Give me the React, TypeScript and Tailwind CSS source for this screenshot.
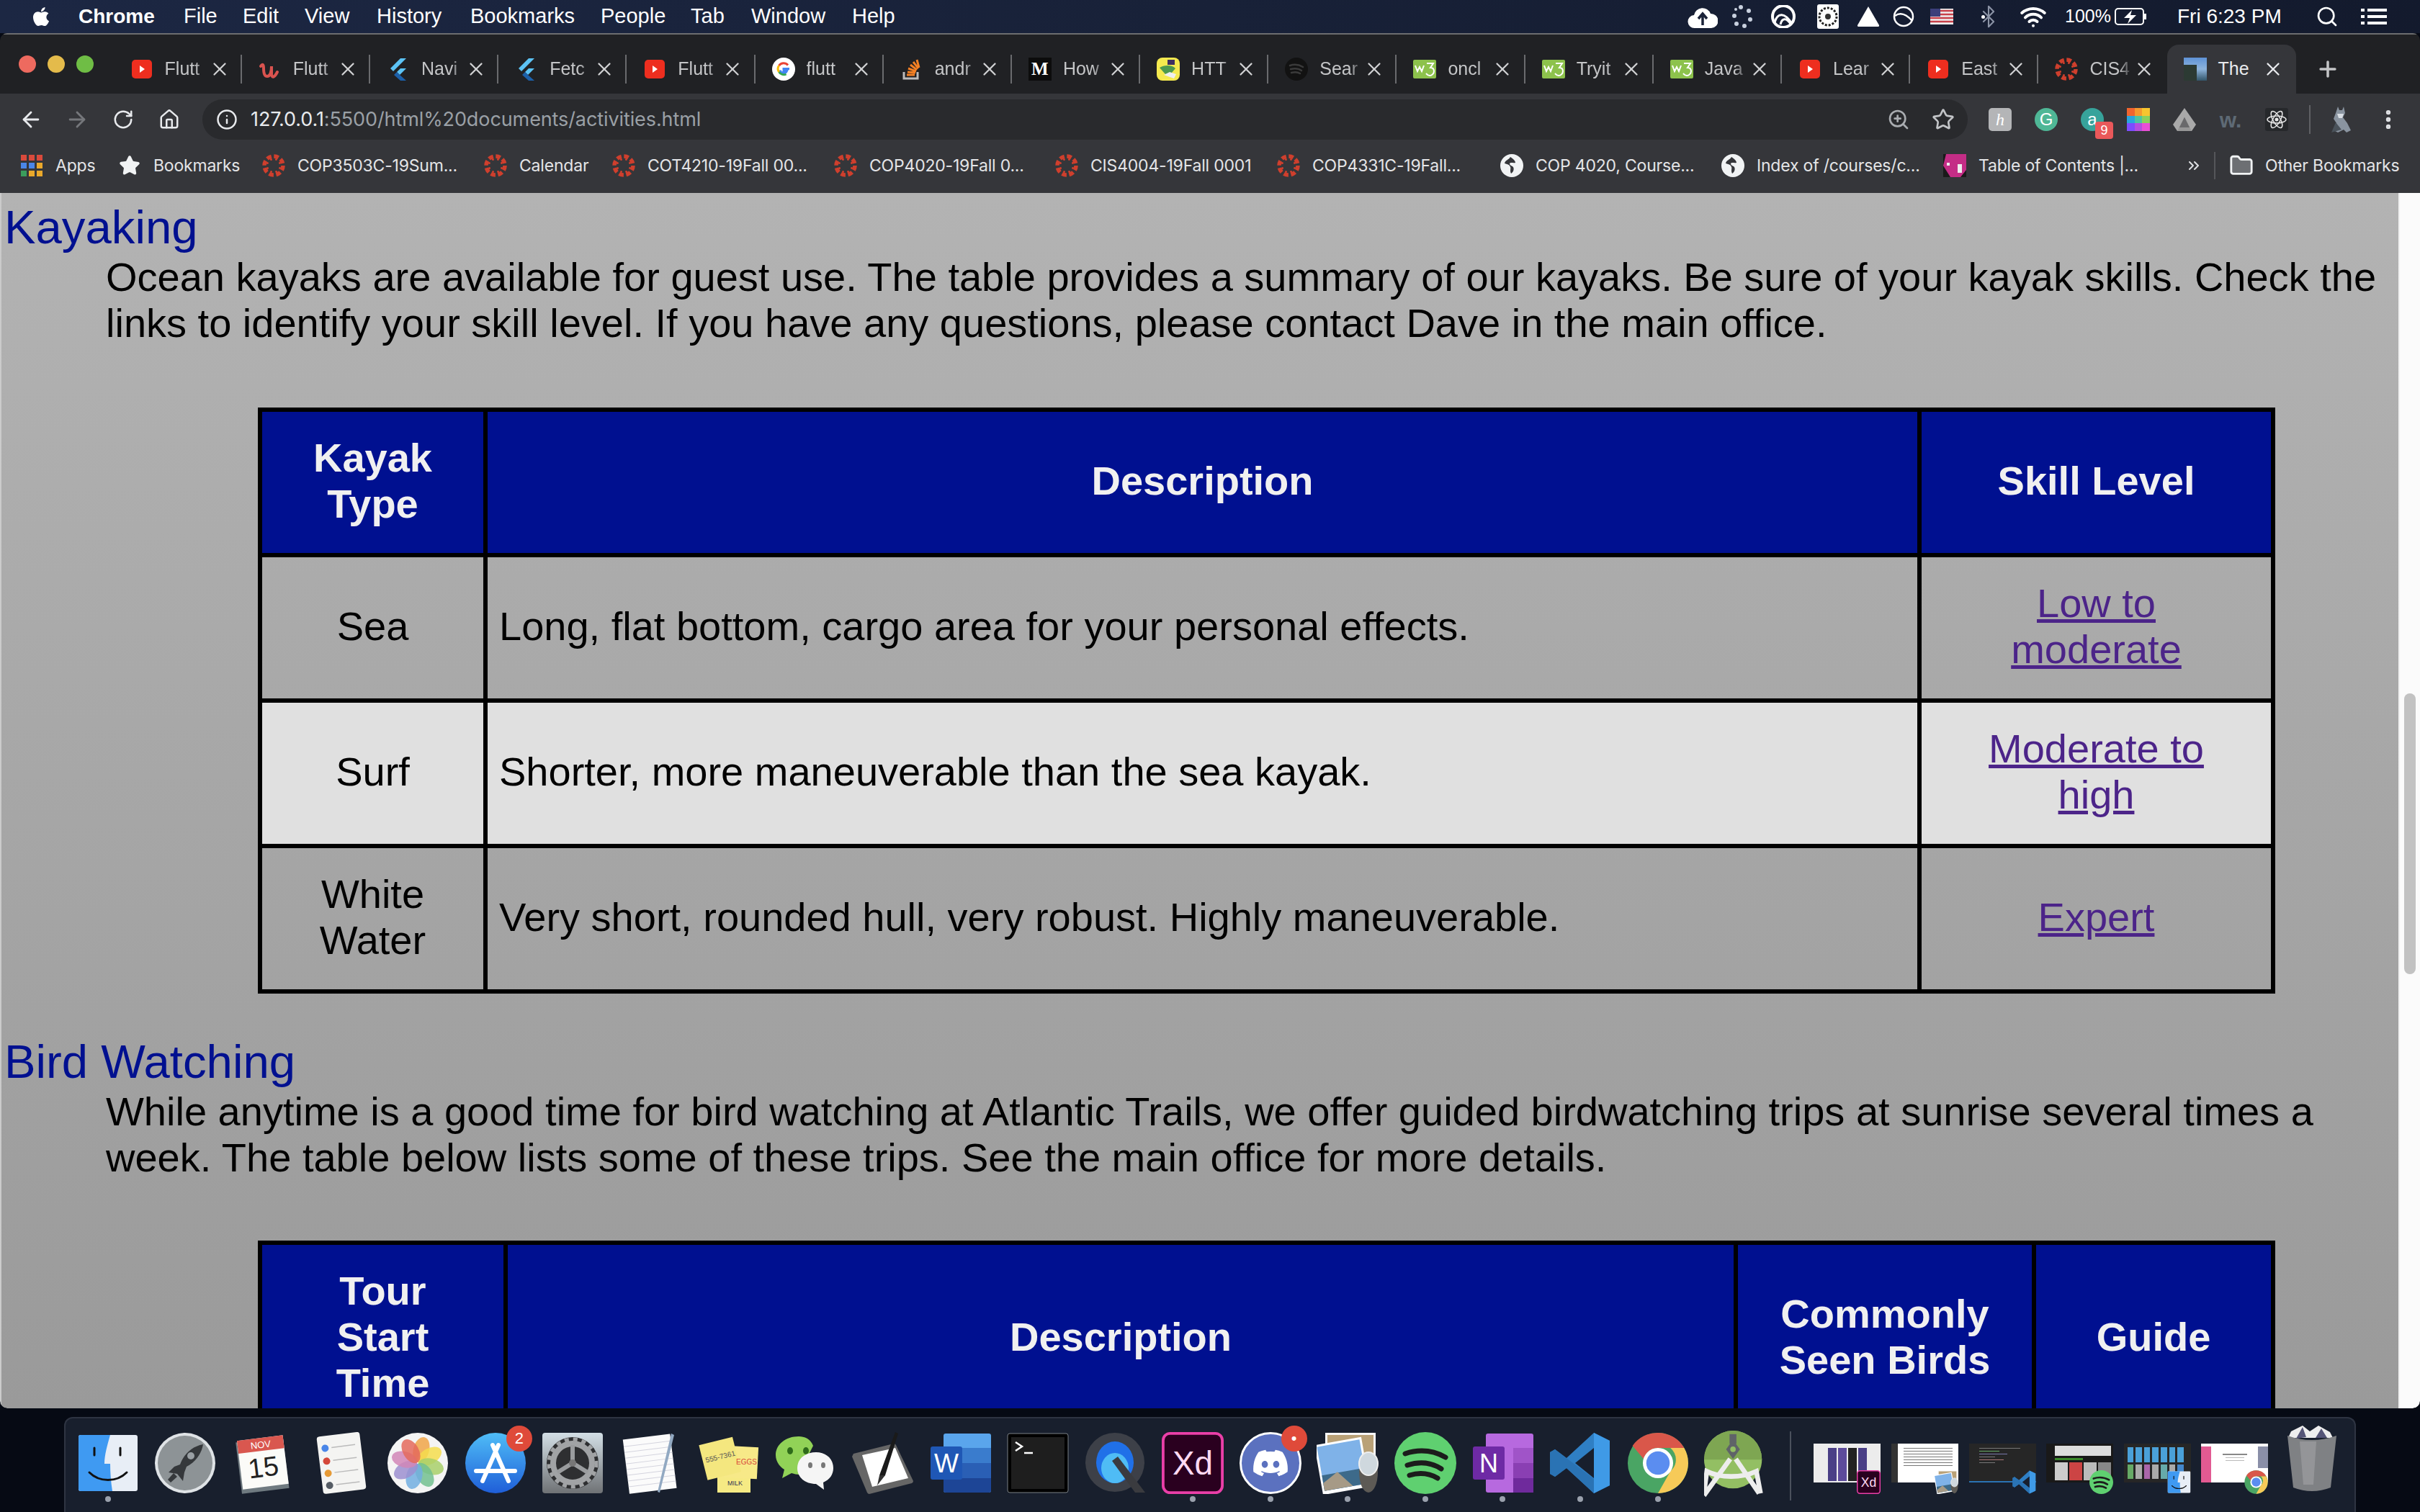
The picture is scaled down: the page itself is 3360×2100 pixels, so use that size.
import React from "react";
import { FaApple, FaDiscord } from "react-icons/fa";
import { Search, X, Plus, ArrowLeft, ArrowRight, RotateCw, Home, Info, ZoomIn, Star, MoreVertical, Folder, ChevronsRight, Wifi, Bluetooth } from "lucide-react";

const Canvas = ({ s = 32 }: { s?: number }) => (
  <svg width={s} height={s} viewBox="0 0 32 32" className="flex-none">
    <circle cx="16" cy="16" r="13" fill="none" stroke="#cf3f2d" strokeWidth="5.5" strokeDasharray="6.6 3.6" />
    {[0, 45, 90, 135, 180, 225, 270, 315].map((a) => (
      <circle key={a} cx="16" cy="6.8" r="1.5" fill="#cf3f2d" transform={`rotate(${a + 22} 16 16)`} />
    ))}
  </svg>
);
const YT = () => (
  <svg width="32" height="32" viewBox="0 0 32 32" className="flex-none"><rect x="2" y="3" width="28" height="26" rx="5" fill="#ee2e1f" /><path d="M13 11l7 5-7 5z" fill="#fff" /></svg>
);
const Udemy = () => (
  <svg width="32" height="32" viewBox="0 0 32 32" className="flex-none"><path d="M3 12c3-4 4-2 4 3 0 6 1 11 5 11s6-6 6-14v12c1 4 4 4 8-4" fill="none" stroke="#d9534f" strokeWidth="4" strokeLinecap="round" /></svg>
);
const Flutter = () => (
  <svg width="32" height="32" viewBox="0 0 32 32" className="flex-none"><path d="M19 1h8L9 19l-4-4z" fill="#5cc3f5" /><path d="M19 15h8l-9 9-4-4z" fill="#5cc3f5" /><path d="M14 20l4 4 9 8h-8l-9-8z" fill="#1c5fa8" /></svg>
);
const Google = () => (
  <svg width="32" height="32" viewBox="0 0 32 32" className="flex-none">
    <circle cx="16" cy="16" r="16" fill="#fff" />
    <path d="M24 15.500h-8v3h4.600a5 5 0 0 1-9.500-1" fill="none" stroke="#4285f4" strokeWidth="3" />
    <path d="M22 10.500A8 8 0 0 0 9.600 11" fill="none" stroke="#ea4335" strokeWidth="3" />
    <path d="M9.600 11a8 8 0 0 0 0 9" fill="none" stroke="#fbbc05" strokeWidth="3" />
    <path d="M9.600 20a8 8 0 0 0 10 3" fill="none" stroke="#34a853" strokeWidth="3" />
  </svg>
);
const SO = () => (
  <svg width="32" height="32" viewBox="0 0 32 32" className="flex-none">
    <path d="M5 20v9h19v-9" fill="none" stroke="#bcbbbb" strokeWidth="3" />
    <path d="M9 24h11M10 20l11 1M11 15l11 4M14 10l9 7M18 6l7 9M23 3l3 11" fill="none" stroke="#f48024" strokeWidth="3" />
  </svg>
);
const Medium = () => (
  <div className="w-[32px] h-[32px] bg-[#0c0c0c] flex-none flex items-center justify-center text-white text-[25px] font-bold [font-family:'Liberation_Serif',serif]">M</div>
);
const HttpCat = () => (
  <svg width="32" height="32" viewBox="0 0 32 32" className="flex-none">
    <rect width="32" height="32" rx="8" fill="#f5ea4f" /><rect x="15" y="3" width="10" height="7" fill="#3f3060" />
    <path d="M4 14c6-4 18-4 22 1l-6 7-8 1z" fill="#4e9a4e" /><path d="M10 24l14 5 3-6-9-3z" fill="#efefef" />
  </svg>
);
const SpotifyDark = () => (
  <svg width="32" height="32" viewBox="0 0 32 32" className="flex-none">
    <circle cx="16" cy="16" r="16" fill="#121212" /><path d="M7 11c6-2 13-1 18 2M8 16c5-1 11-1 15 2M9 21c4-1 9-1 12 1" fill="none" stroke="#3a3a3a" strokeWidth="2.500" strokeLinecap="round" />
  </svg>
);
const W3 = () => (
  <svg width="32" height="32" viewBox="0 0 32 32" className="flex-none">
    <rect y="3" width="32" height="26" rx="2" fill="#8dc24c" />
    <path d="M3 11l3 8 3-6 3 6 3-8M19 8h9l-4 6c3 0 5 2 5 5s-3 6-6 6-4-2-5-3" fill="none" stroke="#fff" strokeWidth="2" />
  </svg>
);
const PhotoTab = () => (
  <div className="w-[32px] h-[32px] flex-none bg-gradient-to-b from-[#5f93d6] via-[#8eb4dc] to-[#33566a] overflow-hidden flex items-end"><div className="w-[18px] h-[22px] bg-[#2c3a33]" /></div>
);

const tabs: [React.ReactNode, string][] = [
  [<YT />, "Flutt"], [<Udemy />, "Flutt"], [<Flutter />, "Navi"], [<Flutter />, "Fetc"], [<YT />, "Flutt"], [<Google />, "flutt"],
  [<SO />, "andr"], [<Medium />, "How"], [<HttpCat />, "HTT"], [<SpotifyDark />, "Sear"], [<W3 />, "oncl"], [<W3 />, "Tryit"],
  [<W3 />, "Java"], [<YT />, "Lear"], [<YT />, "East"], [<Canvas />, "CIS4"],
];

const Tab = ({ icon, title, sep }: { icon: React.ReactNode; title: string; sep: boolean }) => (
  <div className="w-[178.2px] h-[68px] flex-none flex items-center pl-[23px]">
    {icon}
    <div className="ml-[16px] w-[60px] whitespace-nowrap text-[25px] text-[#c4c5c7] [mask-image:linear-gradient(to_right,black_70%,transparent)]">{title}</div>
    <div className="w-[32px] flex justify-center"><X size={30} strokeWidth={1.8} color="#d0d1d3" /></div>
    <div className="flex-1" />
    {sep && <div className="w-[2px] h-[40px] bg-[#6a6b6e]" />}
  </div>
);

const Menu = () => (
  <div className="h-[46px] flex-none flex items-center justify-between pl-[42px] pr-[46px] bg-gradient-to-r from-[#1c2743] via-[#182138] to-[#131a2d] text-white text-[29px]">
    <div className="flex items-center">
      <div className="w-[30px] mr-[37px]"><FaApple size={30} /></div>
      <span className="w-[146px] font-bold text-[28px]">Chrome</span>
      <span className="w-[82px]">File</span><span className="w-[86px]">Edit</span><span className="w-[100px]">View</span><span className="w-[130px]">History</span><span className="w-[181px]">Bookmarks</span><span className="w-[125px]">People</span><span className="w-[84px]">Tab</span><span className="w-[140px]">Window</span><span>Help</span>
    </div>
    <div className="flex items-center">
      <div className="w-[56px] flex justify-center"><svg width="42" height="34" viewBox="0 0 42 34"><path d="M10 33a9 9 0 0 1-1-18 12 12 0 0 1 23-2 10 10 0 0 1 1 20z" fill="#fff" /><path d="M21 29V15m-6 5l6-7 6 7" stroke="#1a2238" strokeWidth="3.500" fill="none" /></svg></div>
      <div className="w-[54px] flex justify-center"><svg width="30" height="34" viewBox="0 0 30 34"><g fill="#c8d0de"><circle cx="13" cy="4" r="3" /><circle cx="24" cy="9" r="3" /><circle cx="26" cy="21" r="3" /><circle cx="18" cy="30" r="3" /><circle cx="7" cy="27" r="3" /><circle cx="4" cy="16" r="3" /><circle cx="6" cy="7" r="2" /></g></svg></div>
      <div className="w-[60px] flex justify-center"><svg width="40" height="32" viewBox="0 0 40 32"><circle cx="20" cy="16" r="15" fill="none" stroke="#fff" strokeWidth="4" /><path d="M8 24c4-14 14-14 24 2M16 27c2-9 8-10 14-1" fill="none" stroke="#fff" strokeWidth="3" /></svg></div>
      <div className="w-[64px] flex justify-center"><svg width="32" height="36" viewBox="0 0 32 36"><rect x="1" y="1" width="30" height="34" rx="3" fill="#fff" /><circle cx="16" cy="18" r="12" fill="none" stroke="#222" strokeWidth="3" strokeDasharray="3 2" /><circle cx="16" cy="18" r="4" fill="#333" /></svg></div>
      <div className="w-[48px] flex justify-center"><svg width="34" height="30" viewBox="0 0 34 30"><path d="M17 1l15 26q.5 2-2 2H4q-2.500 0-2-2z" fill="#fff" /></svg></div>
      <div className="w-[50px] flex justify-center"><svg width="30" height="30" viewBox="0 0 30 30"><circle cx="15" cy="15" r="13" fill="none" stroke="#fff" strokeWidth="2.500" /><path d="M3 14c8-6 16-2 24 7" fill="none" stroke="#fff" strokeWidth="2.500" /></svg></div>
      <div className="w-[56px] flex justify-center"><svg width="32" height="22" viewBox="0 0 32 22"><rect width="32" height="22" fill="#eee" /><path d="M0 3h32M0 8h32M0 13h32M0 18h32" stroke="#c8414a" strokeWidth="2.500" /><rect width="14" height="11" fill="#3c3f7a" /></svg></div>
      <div className="w-[80px] flex justify-center items-center">
        <div className="flex items-center"><span className="w-[5px] h-[5px] mr-[-12px] rounded-full bg-white" /><Bluetooth size={34} color="#8b93a5" strokeWidth={1.5} /></div>
      </div>
      <div className="w-[38px] flex justify-center"><Wifi size={40} color="#fff" strokeWidth={2.500} /></div>
      <span className="ml-[25px] w-[60px] text-[25px] whitespace-nowrap">100%</span>
      <div className="ml-[9px] w-[45px]"><svg width="45" height="24" viewBox="0 0 45 24"><rect x="1" y="1" width="39" height="22" rx="4" fill="none" stroke="#fff" strokeWidth="2" /><rect x="41" y="8" width="3" height="8" fill="#fff" /><path d="M24 3L13 14h8l-3 8 12-12h-8z" fill="#fff" /></svg></div>
      <span className="ml-[42px] w-[148px] text-[28px] whitespace-nowrap">Fri 6:23 PM</span>
      <div className="ml-[44px] w-[36px]"><Search size={32} color="#fff" strokeWidth={2} /></div>
      <div className="ml-[27px] w-[36px]"><svg width="36" height="24" viewBox="0 0 36 24"><path d="M9 3h27M9 12h27M9 21h27" stroke="#fff" strokeWidth="4" /><path d="M0 3h5M0 12h5M0 21h5" stroke="#fff" strokeWidth="4" /></svg></div>
    </div>
  </div>
);

const Slot = ({ children }: { children: React.ReactNode }) => <div className="w-[64px] h-[56px] flex-none flex items-center justify-center">{children}</div>;

const Toolbar = () => (
  <div className="h-[64px] flex-none bg-[#35363a] pt-[8px] pl-[11px] flex items-start text-[#9aa0a6]">
    <Slot><ArrowLeft size={34} color="#e8eaed" strokeWidth={2} /></Slot>
    <Slot><ArrowRight size={34} color="#75777b" strokeWidth={2} /></Slot>
    <Slot><RotateCw size={30} color="#e8eaed" strokeWidth={2} /></Slot>
    <Slot><Home size={30} color="#e8eaed" strokeWidth={2} /></Slot>
    <div className="ml-[14px] w-[2451px] h-[56px] flex-none rounded-[28px] bg-[#292a2d] flex items-center pl-[19px] pr-[18px]">
      <Info size={30} color="#e8eaed" strokeWidth={2} />
      <div className="ml-[18px] text-[27px] whitespace-nowrap [font-family:Inter,sans-serif] tracking-[-0.1px]"><span className="text-[#e8eaed]">127.0.0.1</span>:5500/html%20documents/activities.html</div>
      <div className="flex-1" />
      <ZoomIn size={32} color="#a9acb0" strokeWidth={2} />
      <div className="ml-[30px]"><Star size={32} color="#c2c4c7" strokeWidth={2} /></div>
    </div>
    <div className="w-[13px] flex-none" />
    <Slot><div className="w-[32px] h-[32px] rounded-[5px] bg-[#b4b5b7] text-white text-[24px] italic flex items-center justify-center [font-family:'Liberation_Serif',serif]">h</div></Slot>
    <Slot><div className="w-[32px] h-[32px] rounded-full bg-[#4fb796] text-white text-[24px] flex items-center justify-center">G</div></Slot>
    <Slot><div className="relative w-[32px] h-[32px] rounded-full bg-[#37a39b] text-white text-[24px] flex items-center justify-center">a<span className="absolute left-[20px] top-[19px] w-[25px] h-[24px] rounded-[4px] bg-[#e9585a] text-white text-[18px] leading-[24px] text-center">9</span></div></Slot>
    <Slot><div className="w-[32px] h-[32px] grid grid-cols-3 grid-rows-3"><i className="bg-[#f0652f]" /><i className="bg-[#f59a2e]" /><i className="bg-[#f7c52f]" /><i className="bg-[#2aa5dd]" /><i className="bg-[#4fc4a0]" /><i className="bg-[#8bd15c]" /><i className="bg-[#7c4dff]" /><i className="bg-[#b44ee0]" /><i className="bg-[#e94fd6]" /></div></Slot>
    <Slot><svg width="32" height="32" viewBox="0 0 32 32"><path d="M16 0l16 23-6 9H6l-6-9z" fill="#a9a9a9" /><path d="M16 13l-7 14h14z" fill="#35363a" /><path d="M6 32l10-19 10 19z" fill="#8c8c8c" opacity=".6" /></svg></Slot>
    <Slot><span className="text-[#5e6a75] text-[30px] font-bold">w.</span></Slot>
    <Slot><svg width="32" height="32" viewBox="0 0 32 32"><rect width="32" height="32" rx="3" fill="#26282b" /><g fill="none" stroke="#e6e6e6" strokeWidth="1.500"><ellipse cx="16" cy="16" rx="13" ry="5" /><ellipse cx="16" cy="16" rx="13" ry="5" transform="rotate(60 16 16)" /><ellipse cx="16" cy="16" rx="13" ry="5" transform="rotate(120 16 16)" /></g><circle cx="16" cy="16" r="2.500" fill="#e6e6e6" /></svg></Slot>
    <div className="ml-[13px] mt-[8px] w-[2px] h-[40px] flex-none bg-[#5f6064]" />
    <div className="w-[9px] flex-none" />
    <Slot><svg width="34" height="40" viewBox="0 0 34 40"><path d="M14 2l2 5h4l2-5 2 9-3 6 6 8 5 10-6 3-4-4-8 4-6-3 4-10-4-6 3-8z" fill="#8a94a0" /><path d="M13 12h9l-2 6h-5z" fill="#d8dde3" /><path d="M5 38l6-14 8 10z" fill="#4a525a" /></svg></Slot>
    <div className="w-[3px] flex-none" />
    <Slot><MoreVertical size={34} color="#dfe1e4" strokeWidth={2.500} /></Slot>
  </div>
);

const Globe2 = () => (
  <div className="w-[32px] h-[32px] flex-none rounded-full bg-[#f1f3f4] flex items-center justify-center"><svg width="32" height="32" viewBox="0 0 32 32"><path d="M14 4c-2 4-7 4-8 9 3 1 7 1 8 5 1 2-1 5 1 9 2-1 5-5 3-9-2-2-5-2-5-5 2-2 5 0 8-1 0-3-3-5-7-8z" fill="#35363a" /></svg></div>
);
const BM = ({ icon, label, w }: { icon: React.ReactNode; label: string; w: string }) => (
  <div className={`${w} flex-none flex items-center`}>
    {icon}
    <span className="ml-[17px] whitespace-nowrap">{label}</span>
  </div>
);

const Bookmarks = () => (
  <div className="h-[74px] flex-none bg-[#35363a] flex items-center pl-[28px] pb-[2px] text-[23px] text-[#e4e5e7] [font-family:Inter,sans-serif] tracking-[-0.2px]">
    <BM w="w-[136px]" label="Apps" icon={<div className="w-[32px] h-[32px] flex-none grid grid-cols-3 gap-[3px] p-[1px]"><i className="bg-[#d94a3c]" /><i className="bg-[#d94a3c]" /><i className="bg-[#d94a3c]" /><i className="bg-[#4a86e8]" /><i className="bg-[#4a86e8]" /><i className="bg-[#e9a82b]" /><i className="bg-[#3b9d5c]" /><i className="bg-[#e9a82b]" /><i className="bg-[#e9a82b]" /></div>} />
    <BM w="w-[200px]" label="Bookmarks" icon={<div className="w-[32px] flex-none flex justify-center"><Star size={30} fill="#f1f3f4" color="#f1f3f4" /></div>} />
    <BM w="w-[308px]" label="COP3503C-19Sum..." icon={<Canvas />} />
    <BM w="w-[178px]" label="Calendar" icon={<Canvas />} />
    <BM w="w-[308px]" label="COT4210-19Fall 00..." icon={<Canvas />} />
    <BM w="w-[307px]" label="COP4020-19Fall 0..." icon={<Canvas />} />
    <BM w="w-[308px]" label="CIS4004-19Fall 0001" icon={<Canvas />} />
    <BM w="w-[310px]" label="COP4331C-19Fall..." icon={<Canvas />} />
    <BM w="w-[307px]" label="COP 4020, Course..." icon={<Globe2 />} />
    <BM w="w-[308px]" label="Index of /courses/c..." icon={<Globe2 />} />
    <BM w="w-[332px]" label="Table of Contents |..." icon={<svg width="32" height="32" viewBox="0 0 32 32" className="flex-none"><rect width="32" height="32" fill="#1a1a1a" /><path d="M4 0h28v22l-8 10H10L0 16z" fill="#c42d86" /><rect x="20" y="14" width="6" height="12" fill="#eee" /><rect x="5" y="12" width="4" height="4" fill="#eee" /></svg>} />
    <div className="w-[32px] flex-none flex justify-center"><ChevronsRight size={24} color="#dfe1e4" /></div>
    <div className="ml-[12px] w-[2px] h-[38px] flex-none bg-[#55565a]" />
    <div className="ml-[19px] flex items-center"><Folder size={34} color="#f1f3f4" fill="#6d6f73" strokeWidth={2} /><span className="ml-[16px] whitespace-nowrap">Other Bookmarks</span></div>
  </div>
);

const th = "border-[6px] border-black bg-[#001090] text-[#f0f0f0] font-bold text-center pt-[32px] pb-[36px] px-[16px]";
const td = "border-[6px] border-black text-center pt-[32px] pb-[36px] px-[16px]";
const tl = "border-[6px] border-black text-left pt-[32px] pb-[36px] px-[16px]";
const Lnk = ({ children }: { children: React.ReactNode }) => <a className="text-[#4c2489] underline">{children}</a>;

const Page = () => (
  <div className="flex-1 flex min-h-0 overflow-hidden rounded-b-[10px]">
    <div className="flex-1 min-w-0 overflow-hidden border-l-2 border-[#cbcbcb] pl-[4px] pr-[6px] pt-[11px] bg-gradient-to-b from-[#b3b3b3] to-[#9a9a9a] text-black text-[56px] leading-[64px]">
      <h2 className="text-[65.3px] leading-[74px] text-[#001090]">Kayaking</h2>
      <p className="ml-[141px]">Ocean kayaks are available for guest use. The table provides a summary of our kayaks. Be sure of your kayak skills. Check the links to identify your skill level. If you have any questions, please contact Dave in the main office.</p>
      <table className="mt-[85px] ml-[352px] w-[2795px] table-fixed border-collapse">
        <colgroup><col className="w-[313px]" /><col className="w-[1991px]" /><col className="w-[491px]" /></colgroup>
        <thead><tr><th className={th}>Kayak<br />Type</th><th className={th}>Description</th><th className={th}>Skill Level</th></tr></thead>
        <tbody>
          <tr><td className={td}>Sea</td><td className={tl}>Long, flat bottom, cargo area for your personal effects.</td><td className={td}><Lnk>Low to<br />moderate</Lnk></td></tr>
          <tr className="bg-[#e0e0e0]"><td className={td}>Surf</td><td className={tl}>Shorter, more maneuverable than the sea kayak.</td><td className={td}><Lnk>Moderate to<br />high</Lnk></td></tr>
          <tr><td className={td}>White<br />Water</td><td className={tl}>Very short, rounded hull, very robust. Highly maneuverable.</td><td className={td}><Lnk>Expert</Lnk></td></tr>
        </tbody>
      </table>
      <h2 className="mt-[58px] text-[65.3px] leading-[74px] text-[#001090]">Bird Watching</h2>
      <p className="ml-[141px]">While anytime is a good time for bird watching at Atlantic Trails, we offer guided birdwatching trips at sunrise several times a week. The table below lists some of these trips. See the main office for more details.</p>
      <table className="mt-[83px] ml-[352px] w-[2795px] table-fixed border-collapse">
        <colgroup><col className="w-[341px]" /><col className="w-[1708px]" /><col className="w-[414px]" /><col className="w-[332px]" /></colgroup>
        <thead><tr><th className={th}>Tour<br />Start<br />Time</th><th className={th}>Description</th><th className={th}>Commonly<br />Seen Birds</th><th className={th}>Guide</th></tr></thead>
      </table>
    </div>
    <div className="w-[30px] flex-none bg-[#fbfbfb] border-l-2 border-[#f0f0f0] pl-[6px]">
      <div className="mt-[695px] w-[16px] h-[390px] rounded-[8px] bg-[#c2c2c2]" />
    </div>
  </div>
);

const Finder = ({ s = 86 }: { s?: number }) => (
  <svg width={s} height={s} viewBox="0 0 86 86"><rect x="2" y="4" width="82" height="78" rx="3" fill="#e8eef6" /><path d="M5 4h41c-4 14-8 28-8 40h8c0 12 1 26 3 38H5q-3 0-3-3V7q0-3 3-3z" fill="#3f9af2" /><path d="M24 22v10M60 22v10" stroke="#111" strokeWidth="3" strokeLinecap="round" /><path d="M17 56c14 14 38 14 52 0" fill="none" stroke="#111" strokeWidth="3" strokeLinecap="round" /></svg>
);
const Rocket = () => (
  <svg width="86" height="86" viewBox="0 0 86 86"><circle cx="43" cy="43" r="42" fill="#dfe3e6" /><circle cx="43" cy="43" r="38" fill="#8d9396" /><path d="M68 17c-16 3-27 14-32 28l-8 3-8 8 12 2 8 10 2-12 3-8c12-6 21-18 23-31z" fill="#35383b" /><path d="M19 66l8-9 5 5-9 8z" fill="#35383b" /><circle cx="51" cy="33" r="5" fill="#9aa0a4" /></svg>
);
const Cal = () => (
  <svg width="86" height="86" viewBox="0 0 86 86"><g transform="rotate(-7 43 43)"><rect x="9" y="10" width="66" height="72" fill="#6f7a80" /><rect x="11" y="8" width="64" height="68" fill="#fbfbf8" /><rect x="11" y="8" width="64" height="18" fill="#d9574f" /><text x="43" y="22" textAnchor="middle" fontSize="13" fill="#fff" fontFamily="Liberation Sans">NOV</text><text x="43" y="62" textAnchor="middle" fontSize="38" fill="#222" fontFamily="Liberation Sans">15</text></g></svg>
);
const Reminders = () => (
  <svg width="86" height="86" viewBox="0 0 86 86"><g transform="rotate(-7 43 43)"><rect x="14" y="3" width="60" height="80" rx="4" fill="#f4f4f2" /><circle cx="24" cy="20" r="5" fill="#4a86e8" /><circle cx="24" cy="38" r="5" fill="#d4483a" /><circle cx="24" cy="55" r="5" fill="#e69a35" /><circle cx="24" cy="72" r="5" fill="#555c64" /><path d="M33 20h33M33 38h33M33 55h33M33 72h33" stroke="#bbb" strokeWidth="1.500" /></g></svg>
);
const Photos = () => {
  const c = ["#f0a548", "#f4dd4e", "#a8cf6a", "#72bf8f", "#72aee0", "#9c8fd0", "#d186b7", "#e46a5c"];
  return <svg width="86" height="86" viewBox="0 0 86 86"><circle cx="43" cy="43" r="42" fill="#f4f4f4" />{c.map((f, i) => <ellipse key={i} cx="43" cy="24" rx="11" ry="18" fill={f} opacity=".85" transform={`rotate(${i * 45 + 15} 43 43)`} />)}</svg>;
};
const AppStore = () => (
  <svg width="86" height="86" viewBox="0 0 86 86"><defs><linearGradient id="as" x1="0" y1="0" x2="0" y2="1"><stop offset="0" stopColor="#4fbdf7" /><stop offset="1" stopColor="#1f5ed8" /></linearGradient></defs><circle cx="43" cy="43" r="42" fill="url(#as)" /><path d="M16 54h54M39 18l22 50M47 18L25 68" stroke="#fff" strokeWidth="6" strokeLinecap="round" /></svg>
);
const Gear = () => (
  <svg width="86" height="86" viewBox="0 0 86 86"><defs><linearGradient id="gr" x1="0" y1="0" x2="0" y2="1"><stop offset="0" stopColor="#d3dfe6" /><stop offset="1" stopColor="#6f7275" /></linearGradient></defs><rect x="1" y="1" width="84" height="84" rx="4" fill="url(#gr)" /><circle cx="43" cy="43" r="36" fill="#2e2f31" /><circle cx="43" cy="43" r="27" fill="none" stroke="#a1a3a5" strokeWidth="8" /><circle cx="43" cy="43" r="33" fill="none" stroke="#a1a3a5" strokeWidth="5" strokeDasharray="6 6" /><path d="M43 43V18M43 43L22 56M43 43l21 13" stroke="#9a9c9e" strokeWidth="6" /><circle cx="43" cy="43" r="5" fill="#777" /></svg>
);
const TextEdit = () => (
  <svg width="86" height="86" viewBox="0 0 86 86"><g transform="rotate(-7 43 43)"><rect x="9" y="6" width="66" height="76" fill="#fbfbfb" /><path d="M9 16h66M9 24h66M9 32h66M9 40h66M9 48h66M9 56h66M9 64h66M9 72h66" stroke="#d4d4de" strokeWidth="1" /></g><path d="M72 2l4 2-20 80-3-1z" fill="#92a9c2" /></svg>
);
const Stickies = () => (
  <svg width="86" height="86" viewBox="0 0 86 86"><rect x="28" y="52" width="46" height="32" fill="#f6ea84" /><rect x="36" y="20" width="48" height="44" fill="#f7e988" transform="rotate(3 60 42)" /><g transform="rotate(-14 30 30)"><rect x="6" y="12" width="48" height="50" fill="#f4e77f" /><text x="10" y="38" fontSize="10" fill="#555" fontFamily="Liberation Sans">555-7361</text></g><text x="54" y="45" fontSize="10" fill="#d94a3c" fontFamily="Liberation Sans">EGGS</text><text x="42" y="74" fontSize="9" fill="#335" fontFamily="Liberation Sans">MILK</text></svg>
);
const WeChat = () => (
  <svg width="86" height="86" viewBox="0 0 86 86"><path d="M34 6c-18 0-32 11-32 26 0 8 5 16 12 20l-3 12 13-7c4 1 7 2 10 2l20-40C50 9 42 6 34 6z" fill="#91d257" /><ellipse cx="22" cy="26" rx="4" ry="5" fill="#2e6b1a" /><ellipse cx="44" cy="26" rx="4" ry="5" fill="#2e6b1a" /><path d="M58 28c-15 0-26 9-26 22s11 22 26 22l11 8-1-10c9-4 14-11 14-20 0-13-10-22-24-22z" fill="#f5f5f5" /><ellipse cx="50" cy="46" rx="3" ry="4" fill="#777" /><ellipse cx="68" cy="46" rx="3" ry="4" fill="#777" /></svg>
);
const Pad = () => (
  <svg width="86" height="86" viewBox="0 0 86 86"><path d="M2 30L58 16q2 0 3 2l24 50q0 2-2 3L24 86q-2 0-3-2L0 34z" fill="#666" /><path d="M14 32l46-10 18 42-50 12z" fill="#fff" /><path d="M60 0L38 60l3 4 5-4L64 2z" fill="#1a1a1a" /><path d="M38 60l-3 14 11-14z" fill="#333" /></svg>
);
const Word = () => (
  <svg width="86" height="86" viewBox="0 0 86 86"><rect x="20" y="2" width="66" height="82" rx="3" fill="#5aa5ec" /><rect x="20" y="22" width="66" height="21" fill="#3a7ccd" /><rect x="20" y="43" width="66" height="21" fill="#2a5fb5" /><path d="M20 64h66v17q0 3-3 3H23q-3 0-3-3z" fill="#1d4596" /><rect x="2" y="20" width="44" height="46" rx="3" fill="#1f57b5" /><text x="24" y="56" textAnchor="middle" fontSize="36" fill="#fff" fontFamily="Liberation Sans">W</text></svg>
);
const Term = () => (
  <svg width="86" height="86" viewBox="0 0 86 86"><rect x="1" y="2" width="84" height="82" rx="3" fill="#000" stroke="#7b8186" strokeWidth="1" /><rect x="6" y="7" width="74" height="72" fill="#1e1e1e" /><path d="M12 14l9 6-9 6" fill="none" stroke="#fff" strokeWidth="2.500" /><path d="M24 29h12" stroke="#fff" strokeWidth="2.500" /></svg>
);
const QT = () => (
  <svg width="86" height="86" viewBox="0 0 86 86"><circle cx="42" cy="42" r="41" fill="#3d4048" /><ellipse cx="42" cy="42" rx="26" ry="29" fill="#2070e8" /><ellipse cx="42" cy="50" rx="19" ry="21" fill="#4fbcf5" /><path d="M38 40l8-6 38 50H70z" fill="#3a3b3f" /></svg>
);
const Xd = ({ s = 90 }: { s?: number }) => (
  <svg width={s} height={s} viewBox="0 0 90 90"><rect x="2" y="2" width="86" height="86" rx="10" fill="#2a001f" stroke="#ea3fa8" strokeWidth="4" /><text x="45" y="62" textAnchor="middle" fontSize="48" fill="#ffd9f2" fontFamily="Liberation Sans">Xd</text></svg>
);
const Preview = ({ s = 86 }: { s?: number }) => (
  <svg width={s} height={s} viewBox="0 0 86 86"><rect x="12" y="1" width="70" height="66" fill="#f8f8f8" /><rect x="15" y="4" width="64" height="34" fill="#b9a177" /><g transform="rotate(-10 36 50)"><rect x="3" y="12" width="66" height="70" fill="#fff" /><rect x="6" y="15" width="60" height="62" fill="#7fb2e8" /><rect x="6" y="55" width="60" height="22" fill="#3d6a8a" /><path d="M6 66l22-12 18 23H6z" fill="#a69a86" /></g><ellipse cx="72" cy="56" rx="13" ry="28" fill="#5d5a55" /><ellipse cx="72" cy="44" rx="13" ry="16" fill="#cfd8de" stroke="#eee" strokeWidth="2" /></svg>
);
const Spotify = ({ s = 86 }: { s?: number }) => (
  <svg width={s} height={s} viewBox="0 0 86 86"><circle cx="43" cy="43" r="43" fill="#5fd070" /><path d="M15 30c18-6 38-5 56 5M18 46c16-5 33-4 47 5M21 60c13-4 27-3 39 4" fill="none" stroke="#1c1c1c" strokeWidth="7" strokeLinecap="round" /></svg>
);
const OneNote = () => (
  <svg width="86" height="86" viewBox="0 0 86 86"><rect x="20" y="2" width="66" height="82" rx="3" fill="#b769df" /><rect x="58" y="22" width="28" height="21" fill="#a054c8" /><rect x="58" y="43" width="28" height="21" fill="#8a3fb3" /><rect x="58" y="64" width="28" height="20" fill="#6f2a9c" /><rect x="2" y="20" width="44" height="46" rx="3" fill="#6e2aa5" /><text x="24" y="56" textAnchor="middle" fontSize="36" fill="#fff" fontFamily="Liberation Sans">N</text></svg>
);
const VSC = ({ s = 86 }: { s?: number }) => (
  <svg width={s} height={s} viewBox="0 0 86 86"><path d="M62 1l22 11v62L62 85 24 50 8 62l-7-4V28l7-4 16 12z" fill="#2f7fc4" /><path d="M62 1l22 11v62L62 85z" fill="#3f9ae6" /><path d="M62 22L36 43l26 21z" fill="#181f2d" /><path d="M1 28l7-4 54 41v20L24 50 8 62l-7-4z" fill="#2a72b3" opacity=".9" /></svg>
);
const Chrome = ({ s = 90 }: { s?: number }) => (
  <svg width={s} height={s} viewBox="0 0 90 90"><circle cx="45" cy="45" r="44" fill="#4aa564" /><path d="M45 1a44 44 0 0 1 38 22H45a22 22 0 0 0-21 16L8 20A44 44 0 0 1 45 1z" fill="#d9574a" /><path d="M83 23a44 44 0 0 1-38 66l18-32a22 22 0 0 0 0-34z" fill="#f6ca58" /><circle cx="45" cy="45" r="22" fill="#fff" /><circle cx="45" cy="45" r="17" fill="#5b8df0" /></svg>
);
const Studio = () => (
  <svg width="90" height="96" viewBox="0 0 90 96"><ellipse cx="42" cy="43" rx="42" ry="42" fill="#93bf63" /><path d="M0 43a42 42 0 0 1 84 0z" fill="#7ea652" /><rect x="37" y="6" width="10" height="14" fill="#5f6368" /><path d="M42 14l-10 14 10 14 10-14z" fill="#5f6368" /><circle cx="42" cy="28" r="4" fill="#93bf63" /><path d="M38 42L2 92l-2-2 4-30c20 10 50 10 72 0l6 32M46 42l34 50" fill="none" stroke="#ededed" strokeWidth="7" /></svg>
);
const Trash = () => (
  <svg width="86" height="96" viewBox="0 0 86 96"><path d="M14 10l16-8 10 8 12-8 16 9 4 8H10z" fill="#eee" /><path d="M30 4l5 14-14 2zM56 6l8 13-16 0z" fill="#557" /><path d="M9 16q34 12 68 0l-8 72q-26 10-52 0z" fill="#7f8184" /><path d="M26 24l5 60h14l4-60z" fill="#9c9ea1" opacity=".7" /></svg>
);

const DockItem = ({ children, dot, badge }: { children: React.ReactNode; dot?: boolean; badge?: string }) => (
  <div className="w-[107.6px] h-[132px] flex-none flex flex-col items-center pt-[18px]">
    <div className="relative w-[86px] h-[88px] flex items-center justify-center">
      {children}
      {badge !== undefined && <span className="absolute right-[-8px] top-[-8px] w-[36px] h-[36px] rounded-full bg-[#df4a3a] text-white text-[22px] leading-[36px] text-center [font-family:'Liberation_Sans',sans-serif]">{badge}</span>}
    </div>
    {dot && <span className="mt-[2px] w-[8px] h-[8px] rounded-full bg-[#9aa1ad]" />}
  </div>
);

const Thumb = ({ children, badge }: { children: React.ReactNode; badge: React.ReactNode }) => (
  <div className="w-[107.6px] flex-none flex justify-center pt-[35px]">
    <div className="relative w-[93px] h-[54px]">
      <div className="w-full h-full overflow-hidden">{children}</div>
      <div className="absolute right-0 bottom-[-16px] w-[33px] h-[33px] flex items-center justify-center">{badge}</div>
    </div>
  </div>
);

const Dock = () => (
  <div className="h-[132px] mt-[12px] ml-[89px] w-[3182px] flex-none rounded-t-[12px] bg-[#181f2d] border-t-2 border-x-2 border-[#2e3442] flex pl-[5px]">
    <DockItem dot><Finder /></DockItem>
    <DockItem><Rocket /></DockItem>
    <DockItem><Cal /></DockItem>
    <DockItem><Reminders /></DockItem>
    <DockItem><Photos /></DockItem>
    <DockItem badge="2"><AppStore /></DockItem>
    <DockItem><Gear /></DockItem>
    <DockItem><TextEdit /></DockItem>
    <DockItem><Stickies /></DockItem>
    <DockItem><WeChat /></DockItem>
    <DockItem><Pad /></DockItem>
    <DockItem><Word /></DockItem>
    <DockItem><Term /></DockItem>
    <DockItem><QT /></DockItem>
    <DockItem dot><Xd /></DockItem>
    <DockItem dot badge="•"><div className="w-[86px] h-[86px] rounded-full bg-[#5b71bf] border-[3px] border-white flex items-center justify-center"><FaDiscord size={52} color="#fff" /></div></DockItem>
    <DockItem dot><Preview /></DockItem>
    <DockItem dot><Spotify /></DockItem>
    <DockItem dot><OneNote /></DockItem>
    <DockItem dot><VSC /></DockItem>
    <DockItem dot><Chrome /></DockItem>
    <DockItem><Studio /></DockItem>
    <div className="w-[2px] h-[96px] mt-[18px] ml-[22px] mr-[24px] flex-none bg-[#4a505c]" />
    <Thumb badge={<Xd s={33} />}>
      <div className="w-full h-full bg-[#ececec] flex justify-center gap-[2px] pt-[6px] pb-[2px]"><i className="w-[12px] bg-[#4a3f86]" /><i className="w-[12px] bg-[#5d4b9b]" /><i className="w-[12px] bg-[#222]" /><i className="w-[12px] bg-[#4a3f86]" /></div>
    </Thumb>
    <Thumb badge={<Preview s={33} />}>
      <div className="w-full h-full bg-[#333] flex"><i className="w-[9px]" /><div className="flex-1 bg-white flex flex-col gap-[3px] px-[8px] pt-[6px]"><i className="h-[1px] bg-[#777]" /><i className="h-[1px] bg-[#777]" /><i className="h-[1px] bg-[#777]" /><i className="h-[1px] bg-[#777]" /><i className="h-[1px] bg-[#777]" /><i className="h-[1px] bg-[#777]" /><i className="h-[1px] bg-[#777]" /></div></div>
    </Thumb>
    <Thumb badge={<VSC s={33} />}>
      <div className="w-full h-full bg-[#262626] flex flex-col gap-[3px] pl-[14px] pr-[22px] pt-[6px] border-b-2 border-[#2a72b3]"><i className="h-[1px] bg-[#777]" /><i className="h-[1px] w-[50%] bg-[#6a6]" /><i className="h-[1px] w-[70%] bg-[#77a]" /><i className="h-[1px] w-[40%] bg-[#777]" /><i className="h-[1px] w-[60%] bg-[#a77]" /><i className="h-[1px] w-[40%] bg-[#777]" /></div>
    </Thumb>
    <Thumb badge={<Spotify s={33} />}>
      <div className="w-full h-full bg-[#191919] flex flex-col gap-[3px] p-[3px] pl-[12px]"><i className="h-[14px] bg-[#ddd]" /><i className="h-[3px] w-[50%] bg-[#3a8a2a]" /><div className="flex-1 flex gap-[2px]"><i className="flex-1 bg-[#ccc]" /><i className="flex-1 bg-[#c44]" /><i className="flex-1 bg-[#bbb]" /><i className="flex-1 bg-[#888]" /></div></div>
    </Thumb>
    <Thumb badge={<Finder s={33} />}>
      <div className="w-full h-full bg-[#262626] grid grid-cols-7 gap-[3px] p-[5px] pr-[10px]"><i className="bg-[#4aa0d8]" /><i className="bg-[#4aa0d8]" /><i className="bg-[#4aa0d8]" /><i className="bg-[#4aa0d8]" /><i className="bg-[#4aa0d8]" /><i className="bg-[#4aa0d8]" /><i className="bg-[#4aa0d8]" /><i className="bg-[#6a6]" /><i className="bg-[#aaa]" /><i className="bg-[#a6a]" /><i className="bg-[#aaa]" /><i className="bg-[#6aa]" /><i className="bg-[#aaa]" /><i className="bg-[#48c]" /></div>
    </Thumb>
    <Thumb badge={<Chrome s={33} />}>
      <div className="w-full h-full bg-white flex pt-[4px]"><i className="w-[14px] bg-[#e25a92]" /><div className="flex-1 flex flex-col items-center gap-[3px] pt-[10px]"><i className="w-[34px] h-[2px] bg-[#888]" /><i className="w-[26px] h-[1px] bg-[#bbb]" /><i className="w-[26px] h-[1px] bg-[#bbb]" /></div><i className="w-[14px] h-[30px] bg-[#8a8fa8]" /></div>
    </Thumb>
    <div className="w-[107.6px] flex-none flex justify-center pt-[8px]"><Trash /></div>
  </div>
);

export default function App() {
  return (
    <div className="w-[3360px] h-[2100px] overflow-hidden flex flex-col bg-[#060a14] [font-family:'Liberation_Sans',sans-serif]">
      <Menu />
      <div className="h-[1910px] flex-none flex flex-col rounded-t-[10px] rounded-b-[10px] overflow-hidden">
        <div className="h-[84px] flex-none bg-[#202124] border-t-2 border-[#6c6d6f] pt-[14px] flex">
          <div className="w-[157.6px] h-[54px] flex-none flex items-center gap-[16px] pl-[26px]">
            <span className="w-[24px] h-[24px] rounded-full bg-[#ee6a5f]" />
            <span className="w-[24px] h-[24px] rounded-full bg-[#e4bb4b]" />
            <span className="w-[24px] h-[24px] rounded-full bg-[#6fbd45]" />
          </div>
          {tabs.map(([ic, t], i) => <Tab key={i} icon={ic} title={t} sep={i < 15} />)}
          <div className="relative w-[179px] h-[68px] flex-none flex items-center pl-[23px] bg-[#35363a] rounded-t-[16px]">
            <PhotoTab />
            <div className="ml-[16px] w-[60px] whitespace-nowrap text-[25px] text-[#e8eaed]">The</div>
            <div className="w-[32px] flex justify-center"><X size={30} strokeWidth={1.8} color="#e8eaed" /></div>
          </div>
          <div className="w-[88px] h-[68px] flex-none flex items-center justify-center"><Plus size={34} strokeWidth={2.500} color="#c4c5c7" /></div>
        </div>
        <Toolbar />
        <Bookmarks />
        <Page />
      </div>
      <Dock />
    </div>
  );
}
